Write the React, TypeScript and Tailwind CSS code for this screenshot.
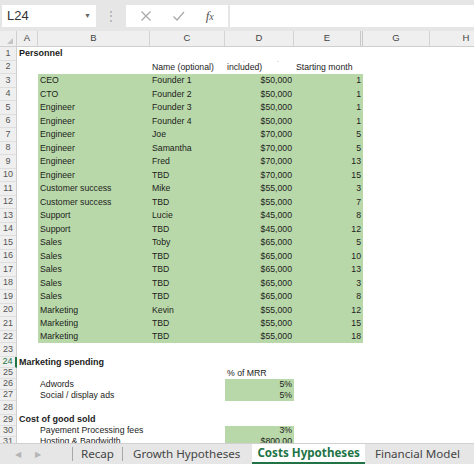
import React from "react";

type Person = [string, string, string, string];

const people: Person[] = [
  ["CEO", "Founder 1", "$50,000", "1"],
  ["CTO", "Founder 2", "$50,000", "1"],
  ["Engineer", "Founder 3", "$50,000", "1"],
  ["Engineer", "Founder 4", "$50,000", "1"],
  ["Engineer", "Joe", "$70,000", "5"],
  ["Engineer", "Samantha", "$70,000", "5"],
  ["Engineer", "Fred", "$70,000", "13"],
  ["Engineer", "TBD", "$70,000", "15"],
  ["Customer success", "Mike", "$55,000", "3"],
  ["Customer success", "TBD", "$55,000", "7"],
  ["Support", "Lucie", "$45,000", "8"],
  ["Support", "TBD", "$45,000", "12"],
  ["Sales", "Toby", "$65,000", "5"],
  ["Sales", "TBD", "$65,000", "10"],
  ["Sales", "TBD", "$65,000", "13"],
  ["Sales", "TBD", "$65,000", "3"],
  ["Sales", "TBD", "$65,000", "8"],
  ["Marketing", "Kevin", "$55,000", "12"],
  ["Marketing", "TBD", "$55,000", "15"],
  ["Marketing", "TBD", "$55,000", "18"],
];

// heights of rows 3..22 (rows 1-20 are regular, 21 a bit taller, 22 short)
const personHeights = (i: number) =>
  i === 18 ? "h-[14px]" : i === 19 ? "h-[12px]" : "h-[13.5px]";

const GREEN = "bg-[#b9d8a9]";

function Row({
  num,
  h,
  active,
  children,
}: {
  num: number;
  h: string;
  active?: boolean;
  children?: React.ReactNode;
}) {
  return (
    <div className={`flex shrink-0 ${h}`}>
      <div
        className={`w-[17px] shrink-0 flex items-center justify-center bg-[#efefef] border-b border-[#dedede] text-[9px] ${
          active ? "border-r-2 border-r-[#217346] text-[#217346]" : "border-r border-r-[#cfcfcf] text-[#555]"
        }`}
      >
        {num}
      </div>
      {children}
    </div>
  );
}

function Cell({
  w,
  green,
  right,
  bold,
  children,
}: {
  w: string;
  green?: boolean;
  right?: boolean;
  bold?: boolean;
  children?: React.ReactNode;
}) {
  return (
    <div
      className={`${w} shrink-0 flex items-center whitespace-nowrap overflow-visible px-[2px] ${
        green ? GREEN : ""
      } ${right ? "justify-end" : ""} ${bold ? "font-bold text-[9px]" : ""}`}
    >
      {children}
    </div>
  );
}

export default function App() {
  return (
    <div
      className="w-[474px] h-[464px] overflow-hidden flex flex-col bg-white text-[#1c1c1c] text-[8.7px]"
      style={{ fontFamily: '"Liberation Sans", Arial, sans-serif' }}
    >
      {/* formula bar */}
      <div className="h-[31px] shrink-0 bg-[#e6e6e6] flex items-start pt-[5px] pl-[2px] gap-[2px]">
        <div className="w-[94px] h-[22px] bg-white flex items-center justify-between px-[5px]">
          <span className="text-[13px] text-[#333]">L24</span>
          <span className="text-[7px] text-[#666]">▼</span>
        </div>
        <div className="w-[26px] h-[22px] flex items-center justify-center text-[#a5a5a5] text-[12px]">
          ⋮
        </div>
        <div className="w-[102px] h-[22px] bg-white flex items-center justify-around px-[4px]">
          <svg width="12" height="12" viewBox="0 0 12 12">
            <path d="M1.5 1.5l9 9M10.5 1.5l-9 9" stroke="#a8a8a8" strokeWidth="1.2" />
          </svg>
          <svg width="13" height="12" viewBox="0 0 13 12">
            <path d="M1.5 6.5l3.5 3.5 7-8" fill="none" stroke="#a8a8a8" strokeWidth="1.2" />
          </svg>
          <span
            className="text-[13px] italic text-[#555]"
            style={{ fontFamily: '"Liberation Serif", serif' }}
          >
            f<span className="text-[10px]">x</span>
          </span>
        </div>
        <div className="flex-1 h-[22px] bg-white" />
      </div>

      {/* column headers */}
      <div className="h-[16px] shrink-0 flex bg-[#efefef] border-b border-[#cfcfcf] text-[9.5px] text-[#444]">
        <div className="w-[17px] shrink-0 relative border-r border-[#cfcfcf]">
          <span className="absolute right-[3px] bottom-[2px] w-0 h-0 border-l-[6px] border-l-transparent border-b-[6px] border-b-[#c4c4c4]" />
        </div>
        <div className="w-[21px] shrink-0 flex items-center justify-center border-r border-[#d4d4d4]">A</div>
        <div className="w-[112px] shrink-0 flex items-center justify-center border-r border-[#d4d4d4]">B</div>
        <div className="w-[75px] shrink-0 flex items-center justify-center border-r border-[#d4d4d4]">C</div>
        <div className="w-[69px] shrink-0 flex items-center justify-center border-r border-[#d4d4d4]">D</div>
        <div className="w-[69px] shrink-0 flex items-center justify-center border-r-[3px] border-double border-[#c8c8c8]">E</div>
        <div className="w-[67px] shrink-0 flex items-center justify-center border-r border-[#d4d4d4]">G</div>
        <div className="w-[72px] shrink-0 flex items-center justify-center">H</div>
      </div>

      {/* sheet */}
      <div className="flex-1 overflow-hidden flex flex-col">
        <Row num={1} h="h-[13.5px]">
          <Cell w="w-[150px]" bold>
            Personnel
          </Cell>
        </Row>
        <Row num={2} h="h-[13.5px]">
          <Cell w="w-[21px]" />
          <Cell w="w-[112px]" />
          <Cell w="w-[75px]">Name (optional)</Cell>
          <div className="w-[69px] shrink-0 relative flex items-center px-[2px]">
            included)
            <span className="absolute left-[18px] top-0 text-[5px] leading-none text-[#666]">ˊ</span>
            <span className="absolute left-[52px] top-0 text-[5px] leading-none text-[#666]">ˋ</span>
          </div>
          <Cell w="w-[69px]">Starting month</Cell>
        </Row>
        {people.map((p, i) => (
          <Row key={i} num={i + 3} h={personHeights(i)}>
            <Cell w="w-[21px]" />
            <Cell w="w-[112px]" green>
              {p[0]}
            </Cell>
            <Cell w="w-[75px]" green>
              {p[1]}
            </Cell>
            <Cell w="w-[69px]" green right>
              {p[2]}
            </Cell>
            <Cell w="w-[69px]" green right>
              {p[3]}
            </Cell>
          </Row>
        ))}
        <Row num={23} h="h-[14px]" />
        <Row num={24} h="h-[11px]" active>
          <Cell w="w-[200px]" bold>
            Marketing spending
          </Cell>
        </Row>
        <Row num={25} h="h-[11px]">
          <Cell w="w-[21px]" />
          <Cell w="w-[112px]" />
          <Cell w="w-[75px]" />
          <Cell w="w-[69px]">% of MRR</Cell>
        </Row>
        <Row num={26} h="h-[11px]">
          <Cell w="w-[21px]" />
          <Cell w="w-[112px]">Adwords</Cell>
          <Cell w="w-[75px]" />
          <Cell w="w-[69px]" green right>
            5%
          </Cell>
        </Row>
        <Row num={27} h="h-[11px]">
          <Cell w="w-[21px]" />
          <Cell w="w-[112px]">Social / display ads</Cell>
          <Cell w="w-[75px]" />
          <Cell w="w-[69px]" green right>
            5%
          </Cell>
        </Row>
        <Row num={28} h="h-[13.5px]" />
        <Row num={29} h="h-[11px]">
          <Cell w="w-[200px]" bold>
            Cost of good sold
          </Cell>
        </Row>
        <Row num={30} h="h-[11px]">
          <Cell w="w-[21px]" />
          <Cell w="w-[112px]">Payement Processing fees</Cell>
          <Cell w="w-[75px]" />
          <Cell w="w-[69px]" green right>
            3%
          </Cell>
        </Row>
        <Row num={31} h="h-[11px]">
          <Cell w="w-[21px]" />
          <Cell w="w-[112px]">Hosting &amp; Bandwidth</Cell>
          <Cell w="w-[75px]" />
          <Cell w="w-[69px]" green right>
            $800.00
          </Cell>
        </Row>
      </div>

      {/* sheet tabs */}
      <div
        className="h-[21px] shrink-0 bg-[#e6e6e6] border-t border-[#d0d0d0] flex items-stretch text-[11.6px] text-[#444] whitespace-nowrap"
        style={{ fontFamily: '"Noto Sans", "Open Sans", sans-serif' }}
      >
        <div className="w-[72px] shrink-0 flex items-center gap-[14px] pl-[15px] text-[8px] text-[#b5b5b5]">
          <span>◀</span>
          <span>▶</span>
        </div>
        <div className="w-px shrink-0 my-[3px] bg-[#a8a8a8]" />
        <div className="shrink-0 px-[8px] flex items-center">Recap</div>
        <div className="w-px shrink-0 my-[3px] bg-[#a8a8a8]" />
        <div className="shrink-0 pl-[10px] pr-[12px] flex items-center">Growth Hypotheses</div>
        <div className="shrink-0 px-[5px] flex items-center bg-white font-bold text-[#217346] border-b-2 border-[#217346]">
          Costs Hypotheses
        </div>
        <div className="shrink-0 px-[10px] flex items-center">Financial Model</div>
      </div>
    </div>
  );
}
